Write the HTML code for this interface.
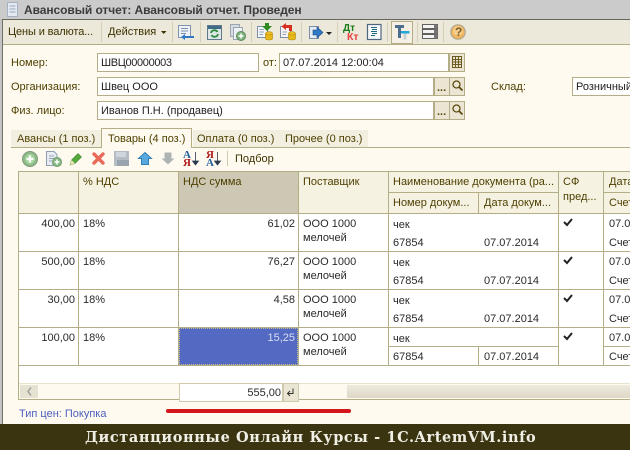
<!DOCTYPE html>
<html><head><meta charset="utf-8"><style>
html,body{margin:0;padding:0}
#p{position:relative;width:630px;height:450px;overflow:hidden;background:#fffaef;font-family:"Liberation Sans",sans-serif;font-size:11px;color:#2a2200;}
#p div{position:absolute;white-space:nowrap;box-sizing:border-box}
.t{line-height:14px;height:14px}
.l{color:#4d3f00;font-size:11px}
.i{background:#fff;border:1px solid #b5ad85;height:19px;line-height:19px;padding-left:3px;font-size:11px;color:#222}
.b{background:#ebe6d3;border:1px solid #b5ad85;height:19px;width:16px}
.h{background:#b5ad85}
.c{color:#2a2a2a;line-height:14px;height:14px;font-size:11px}
.r{text-align:right}
.hd{color:#4d3f00;line-height:14px;height:14px;font-size:11px}
.sep{width:1px;height:20px;top:22px;background:#d5cfb8}
.s{color:#b01818;font-size:11px;font-weight:bold;line-height:10px;height:10px;font-family:"Liberation Serif",serif}
svg{position:absolute;overflow:visible}
</style></head><body><div id="p">
<div style="left:0;top:0;width:630px;height:19px;background:#cbcbcb"></div>
<svg style="left:6px;top:2px" width="14" height="16"><path d="M1.500 .5H11.500V14.500H1.500Z" fill="#e4e9f2" stroke="#a4b0c4"/><path d="M3.500 4H9.500M3.500 7H9.500M3.500 10H9.500" stroke="#9aa8c0"/></svg>
<div class="t" style="left:24px;top:3px;font-weight:bold;font-size:12px;letter-spacing:-.07px;color:#3c3c3c;line-height:15px;height:15px">Авансовый отчет: Авансовый отчет. Проведен</div>
<div style="left:2px;top:19px;width:628px;height:1px;background:#66665c"></div>
<div style="left:0;top:20px;width:630px;height:25px;background:#ece8da;border-bottom:1px solid #b5ad85"></div>
<div style="left:0;top:19px;width:2px;height:405px;background:#c4c4c4"></div>
<div style="left:2px;top:19px;width:1px;height:405px;background:#6f6f68"></div>
<div class="t" style="left:8px;top:25px;color:#3d3200;font-size:11px;letter-spacing:-.12px">Цены и валюта...</div>
<div class="sep" style="left:101px"></div>
<div class="t" style="left:108px;top:25px;color:#3d3200;font-size:11px">Действия</div>
<svg style="left:161px;top:31px" width="6" height="4"><path d="M0 0H5.500L2.700 3Z" fill="#3d3200"/></svg>
<div class="sep" style="left:172px"></div>
<svg style="left:178px;top:25px" width="16" height="16"><path d="M.5 .5H12.500V12.500H.5Z" fill="#eef2f8" stroke="#7d93b0"/><path d="M3 3.500H10M3 6H10M3 8.500H8" stroke="#7d93b0"/><path d="M16 11H7V9L3 12L7 15V13H16Z" fill="#2f78c4"/></svg>
<div class="sep" style="left:200px"></div>
<svg style="left:207px;top:25px" width="15" height="15"><rect x=".5" y=".5" width="14" height="14" fill="#dde7e8" stroke="#607a8c"/><rect x="1" y="1" width="13" height="3" fill="#3f6a88"/><path d="M4 8A3.500 3.500 0 0 1 10.500 7M11 9A3.500 3.500 0 0 1 4.500 10" fill="none" stroke="#2f8a3c" stroke-width="1.800"/></svg>
<svg style="left:230px;top:24px" width="16" height="17"><path d="M.5 .5H9.500V12.500H.5Z" fill="#d8dde4" stroke="#9aa5b2"/><path d="M3.500 3.500H12.500V15.500H3.500Z" fill="#eef1f5" stroke="#9aa5b2"/><circle cx="11" cy="12" r="4.500" fill="#7fb27c" stroke="#5c8a5a"/><path d="M8.500 12H13.500M11 9.500V14.500" stroke="#fff" stroke-width="1.500"/></svg>
<div class="sep" style="left:251px"></div>
<svg style="left:257px;top:23px" width="16" height="18"><path d="M.5 3.500H10.500V14.500H.5Z" fill="#f2f5f9" stroke="#7d8fa8"/><path d="M2.500 6.500H7M2.500 9H7M2.500 11.500H6" stroke="#8fa2ba"/><path d="M8 0H12V3H15L10 8L5 3H8Z" fill="#2e8b1f"/><ellipse cx="12" cy="10.500" rx="3.500" ry="1.800" fill="#f0c020" stroke="#b08a10" stroke-width=".6"/><path d="M8.500 10.500V15.500C8.500 17.500 15.500 17.500 15.500 15.500V10.500C15.500 12.500 8.500 12.500 8.500 10.500Z" fill="#e8b818" stroke="#b08a10" stroke-width=".6"/></svg>
<svg style="left:280px;top:23px" width="16" height="18"><path d="M.5 3.500H10.500V14.500H.5Z" fill="#f8f4f2" stroke="#7d8fa8"/><path d="M2.500 9H7M2.500 11.500H6" stroke="#8fa2ba"/><path d="M6 0L1.500 3.500L6 7V5H9V8H12V2H6Z" fill="#d83020"/><ellipse cx="12" cy="10.500" rx="3.500" ry="1.800" fill="#f0c020" stroke="#b08a10" stroke-width=".6"/><path d="M8.500 10.500V15.500C8.500 17.500 15.500 17.500 15.500 15.500V10.500C15.500 12.500 8.500 12.500 8.500 10.500Z" fill="#e8b818" stroke="#b08a10" stroke-width=".6"/></svg>
<div class="sep" style="left:301px"></div>
<svg style="left:309px;top:26px" width="16" height="15"><path d="M.5 .5H9.500V12.500H.5Z" fill="#e4ebf2" stroke="#7d8fa8"/><path d="M4 4H8V1L14 6.500L8 12V9H4Z" fill="#2f78c4" stroke="#1c4a80" stroke-width=".6"/></svg>
<svg style="left:326px;top:32px" width="6" height="4"><path d="M0 0H6L3 3Z" fill="#222"/></svg>
<div class="sep" style="left:337px"></div>
<div class="t" style="left:343px;top:24px;color:#1a7a1a;font-size:10px;font-weight:bold;line-height:10px;height:10px">Дт</div>
<div class="t" style="left:347px;top:32px;color:#e84040;font-size:10.500px;font-weight:bold;line-height:10px;height:10px">Кт</div>
<svg style="left:367px;top:24px" width="15" height="17"><rect x=".5" y=".5" width="13.500" height="15" fill="#f6f8fa" stroke="#4f6680" stroke-width="1.200"/><path d="M4 3.500H10M5 5.500H10M4 7.500H10M5 9.500H10M4 11.500H8" stroke="#1e6a80"/></svg>
<div class="sep" style="left:387px"></div>
<div style="left:391px;top:21px;width:22px;height:23px;background:#f4f1e4;border:1px solid #b5ad85"></div>
<svg style="left:395px;top:25px" width="14" height="15"><path d="M0 0H9V3H6V13H3V3H0Z" fill="#4e6e90"/><rect x="6" y="6" width="8.500" height="2.500" fill="#22a8d8"/><rect x="8.500" y="8.500" width="3" height="6" fill="#c8d0d4"/></svg>
<div class="sep" style="left:417px"></div>
<svg style="left:422px;top:24px" width="17" height="16"><g fill="#f4f4f4" stroke="#60605c"><rect x=".5" y=".5" width="15" height="4"/><rect x=".5" y="5.500" width="15" height="4"/><rect x=".5" y="10.500" width="15" height="4"/></g><path d="M12 .5H15.500V4.500H12ZM12 5.500H15.500V9.500H12ZM12 10.500H15.500V14.500H12Z" fill="#777"/></svg>
<div class="sep" style="left:443px"></div>
<svg style="left:450px;top:24px" width="16" height="16"><circle cx="8" cy="8" r="7.200" fill="#f2b45c" stroke="#b0a890" stroke-width="1.200"/><circle cx="8" cy="7" r="5" fill="#f6cc88"/></svg>
<div class="t" style="left:455px;top:25px;font-weight:bold;font-size:12px;color:#7a6030">?</div>

<div class="l t" style="left:11px;top:56px">Номер:</div>
<div class="i" style="left:97px;top:53px;width:162px;letter-spacing:-.35px">ШВЦ00000003</div>
<div class="l t" style="left:263px;top:56px">от:</div>
<div class="i" style="left:279px;top:53px;width:170px">07.07.2014 12:00:04</div>
<div class="b" style="left:449px;top:53px"></div>
<svg style="left:452px;top:56px" width="11" height="12"><path d="M.5 .5H9.500V11.500H.5ZM.5 3.500H9.500M.5 6H9.500M.5 8.500H9.500M3.500 .5V11.500M6.500 .5V11.500" fill="none" stroke="#6b5a1e"/></svg>

<div class="l t" style="left:11px;top:80px">Организация:</div>
<div class="i" style="left:97px;top:77px;width:337px">Швец ООО</div>
<div class="b" style="left:434px;top:77px;width:16px"></div>
<div class="b" style="left:449px;top:77px"></div>
<div class="t" style="left:437px;top:81px;font-weight:bold;color:#5c4a10;font-size:11px">...</div>
<svg style="left:452px;top:80px" width="11" height="12"><circle cx="4.500" cy="4.500" r="3.500" fill="none" stroke="#5c4a10" stroke-width="1.300"/><path d="M7 7L10.500 10.500" stroke="#5c4a10" stroke-width="1.800"/></svg>
<div class="l t" style="left:491px;top:80px">Склад:</div>
<div class="i" style="left:572px;top:77px;width:70px">Розничный</div>

<div class="l t" style="left:11px;top:104px">Физ. лицо:</div>
<div class="i" style="left:97px;top:101px;width:337px">Иванов П.Н. (продавец)</div>
<div class="b" style="left:434px;top:101px;width:16px"></div>
<div class="b" style="left:449px;top:101px"></div>
<div class="t" style="left:437px;top:105px;font-weight:bold;color:#5c4a10;font-size:11px">...</div>
<svg style="left:452px;top:104px" width="11" height="12"><circle cx="4.500" cy="4.500" r="3.500" fill="none" stroke="#5c4a10" stroke-width="1.300"/><path d="M7 7L10.500 10.500" stroke="#5c4a10" stroke-width="1.800"/></svg>

<div style="left:11px;top:130px;width:90px;height:17px;background:#f3efe0"></div>
<div style="left:193px;top:130px;width:175px;height:17px;background:#f3efe0"></div>
<div class="h" style="left:11px;top:147px;width:619px;height:1px"></div>
<div style="left:101px;top:128px;width:91px;height:20px;background:#fffaef;border:1px solid #b5ad85;border-bottom:0"></div>
<div class="l t" style="left:17px;top:132px">Авансы (1 поз.)</div>
<div class="l t" style="left:108px;top:132px">Товары (4 поз.)</div>
<div class="l t" style="left:197px;top:132px">Оплата (0 поз.)</div>
<div class="l t" style="left:285px;top:132px">Прочее (0 поз.)</div>

<svg style="left:22px;top:151px" width="16" height="16"><circle cx="8" cy="8" r="7.500" fill="#8fb98a" stroke="#7d9a78"/><circle cx="8" cy="8" r="5" fill="#a5d79d"/><path d="M4.500 8H11.500M8 4.500V11.500" stroke="#fff" stroke-width="2.200"/></svg>
<svg style="left:46px;top:151px" width="16" height="16"><path d="M.5 .5H8L11 3.500V14.500H.5Z" fill="#e8ecf2" stroke="#8f9db0"/><path d="M3 5H8M3 7.500H8M3 10H6" stroke="#96a6b8"/><circle cx="11" cy="11" r="4.500" fill="#86b884" stroke="#6d9a6b"/><path d="M8.500 11H13.500M11 8.500V13.500" stroke="#fff" stroke-width="1.500"/></svg>
<svg style="left:69px;top:152px" width="14" height="14"><path d="M1 13L2.500 8L9 1.500L12.500 5L6 11.500Z" fill="#55a93c" stroke="#3d8a2a" stroke-width=".6"/><path d="M1 13L2.500 8L6 11.500Z" fill="#e8e4b8"/></svg>
<svg style="left:92px;top:152px" width="13" height="13"><path d="M2 2L11 11M11 2L2 11" stroke="#e86a5a" stroke-width="3.400" stroke-linecap="round"/></svg>
<svg style="left:114px;top:151px" width="15" height="15"><rect width="15" height="15" fill="#b4bcc4"/><rect x="2" y="1" width="10" height="5" fill="#cfd6dc"/><rect x="3" y="9" width="12" height="6" fill="#9aa4ae"/></svg>
<svg style="left:138px;top:152px" width="14" height="13"><path d="M7 .5L13.500 6.500H10.500V12.500H3.500V6.500H.5Z" fill="#57a8dc" stroke="#2f7fb8"/></svg>
<svg style="left:161px;top:152px" width="14" height="13"><path d="M7 12.500L13.500 6.500H10.500V.5H3.500V6.500H.5Z" fill="#aeb4b4"/></svg>
<div class="s" style="left:183px;top:150px;color:#1f5fa0">А</div>
<div class="s" style="left:183px;top:158px">Я</div>
<svg style="left:192px;top:152px" width="7" height="14"><path d="M3.500 0V10M.5 9L3.500 13L6.500 9Z" fill="#2a3a50" stroke="#2a3a50" stroke-width=".8"/></svg>
<div class="s" style="left:206px;top:150px">Я</div>
<div class="s" style="left:206px;top:158px;color:#1f5fa0">А</div>
<svg style="left:214px;top:152px" width="7" height="14"><path d="M3.500 0V10M.5 9L3.500 13L6.500 9Z" fill="#2a3a50" stroke="#2a3a50" stroke-width=".8"/></svg>
<div style="left:227px;top:151px;width:1px;height:15px;background:#cfc9b0"></div>
<div class="l t" style="left:235px;top:152px;color:#3d3200">Подбор</div>

<!-- grid -->
<div style="left:18px;top:171px;width:612px;height:42px;background:#f6f2e2"></div>
<div style="left:179px;top:171px;width:119px;height:42px;background:#cdc8b3"></div>
<div style="left:18px;top:213px;width:612px;height:170px;background:#fff"></div>
<div style="left:179px;top:328px;width:119px;height:37px;background:#5369c2;border:1px dotted #c8c090"></div>

<div class="h" style="left:18px;top:171px;width:612px;height:1px"></div>
<div class="h" style="left:18px;top:213px;width:612px;height:1px"></div>
<div class="h" style="left:18px;top:251px;width:612px;height:1px"></div>
<div class="h" style="left:18px;top:289px;width:612px;height:1px"></div>
<div class="h" style="left:18px;top:327px;width:612px;height:1px"></div>
<div class="h" style="left:18px;top:365px;width:612px;height:1px"></div>
<div class="h" style="left:388px;top:192px;width:170px;height:1px"></div>
<div class="h" style="left:603px;top:192px;width:27px;height:1px"></div>
<div class="h" style="left:388px;top:346px;width:170px;height:1px"></div>
<div class="h" style="left:603px;top:346px;width:27px;height:1px"></div>
<div class="h" style="left:18px;top:171px;width:1px;height:229px"></div>
<div class="h" style="left:78px;top:171px;width:1px;height:195px"></div>
<div class="h" style="left:178px;top:171px;width:1px;height:195px"></div>
<div class="h" style="left:298px;top:171px;width:1px;height:195px"></div>
<div class="h" style="left:388px;top:171px;width:1px;height:195px"></div>
<div class="h" style="left:558px;top:171px;width:1px;height:195px"></div>
<div class="h" style="left:603px;top:171px;width:1px;height:195px"></div>
<div class="h" style="left:478px;top:192px;width:1px;height:21px"></div>
<div class="h" style="left:478px;top:346px;width:1px;height:20px"></div>

<div class="hd" style="left:83px;top:175px">% НДС</div>
<div class="hd" style="left:183px;top:175px">НДС сумма</div>
<div class="hd" style="left:303px;top:175px">Поставщик</div>
<div class="hd" style="left:393px;top:175px;width:165px;overflow:hidden">Наименование документа (ра...</div>
<div class="hd" style="left:393px;top:196px">Номер докум...</div>
<div class="hd" style="left:484px;top:196px">Дата докум...</div>
<div class="hd" style="left:563px;top:175px">СФ</div>
<div class="hd" style="left:563px;top:190px">пред...</div>
<div class="hd" style="left:609px;top:175px">Дата</div>
<div class="hd" style="left:609px;top:196px">Счет</div>

<!-- row 1 -->
<div class="c r" style="left:18px;top:217px;width:57px">400,00</div><div class="c" style="left:83px;top:217px">18%</div><div class="c r" style="left:179px;top:217px;width:116px">61,02</div><div class="c" style="left:303px;top:217px">ООО 1000</div><div class="c" style="left:303px;top:231px">мелочей</div><div class="c" style="left:393px;top:218px">чек</div><div class="c" style="left:393px;top:236px">67854</div><div class="c" style="left:484px;top:236px">07.07.2014</div><div class="c" style="left:609px;top:217px">07.07</div><div class="c" style="left:609px;top:236px">Счет</div>
<!-- row 2 -->
<div class="c r" style="left:18px;top:255px;width:57px">500,00</div><div class="c" style="left:83px;top:255px">18%</div><div class="c r" style="left:179px;top:255px;width:116px">76,27</div><div class="c" style="left:303px;top:255px">ООО 1000</div><div class="c" style="left:303px;top:269px">мелочей</div><div class="c" style="left:393px;top:256px">чек</div><div class="c" style="left:393px;top:274px">67854</div><div class="c" style="left:484px;top:274px">07.07.2014</div><div class="c" style="left:609px;top:255px">07.07</div><div class="c" style="left:609px;top:274px">Счет</div>
<!-- row 3 -->
<div class="c r" style="left:18px;top:293px;width:57px">30,00</div><div class="c" style="left:83px;top:293px">18%</div><div class="c r" style="left:179px;top:293px;width:116px">4,58</div><div class="c" style="left:303px;top:293px">ООО 1000</div><div class="c" style="left:303px;top:307px">мелочей</div><div class="c" style="left:393px;top:294px">чек</div><div class="c" style="left:393px;top:312px">67854</div><div class="c" style="left:484px;top:312px">07.07.2014</div><div class="c" style="left:609px;top:293px">07.07</div><div class="c" style="left:609px;top:312px">Счет</div>
<!-- row 4 -->
<div class="c r" style="left:18px;top:331px;width:57px">100,00</div><div class="c" style="left:83px;top:331px">18%</div><div class="c r" style="left:179px;top:331px;width:116px;color:#d8def5">15,25</div><div class="c" style="left:303px;top:331px">ООО 1000</div><div class="c" style="left:303px;top:345px">мелочей</div><div class="c" style="left:393px;top:332px">чек</div><div class="c" style="left:393px;top:350px">67854</div><div class="c" style="left:484px;top:350px">07.07.2014</div><div class="c" style="left:609px;top:331px">07.07</div><div class="c" style="left:609px;top:350px">Счет</div>

<svg style="left:563px;top:218px" width="10" height="9"><path d="M1 4L4 7L9 1" fill="none" stroke="#222" stroke-width="2"/></svg>
<svg style="left:563px;top:256px" width="10" height="9"><path d="M1 4L4 7L9 1" fill="none" stroke="#222" stroke-width="2"/></svg>
<svg style="left:563px;top:294px" width="10" height="9"><path d="M1 4L4 7L9 1" fill="none" stroke="#222" stroke-width="2"/></svg>
<svg style="left:563px;top:332px" width="10" height="9"><path d="M1 4L4 7L9 1" fill="none" stroke="#222" stroke-width="2"/></svg>

<!-- footer -->
<div style="left:19px;top:383px;width:611px;height:16px;background:#fffaef;border-top:1px solid #e8e3cc"></div>
<div style="left:20px;top:385px;width:18px;height:13px;background:#e6e2d2"></div>
<svg style="left:27px;top:387px" width="5" height="9"><path d="M4 .5L1 4.500L4 8.500" fill="none" stroke="#999" stroke-width="1.400"/></svg>
<div style="left:347px;top:385px;width:283px;height:13px;background:linear-gradient(#efebdd,#dcd7c6)"></div>
<div class="h" style="left:18px;top:399px;width:612px;height:1px"></div>
<div style="left:179px;top:383px;width:104px;height:19px;background:#fff;border:1px solid #cfc9ae"></div>
<div class="c r" style="left:180px;top:386px;width:101px">555,00</div>
<div style="left:283px;top:383px;width:16px;height:19px;background:#ebe6d3;border:1px solid #cfc9ae"></div>
<svg style="left:286px;top:388px" width="9" height="9"><path d="M7 .5V5.500H2M4 3L1.500 5.500L4 8" fill="none" stroke="#333"/></svg>
<div style="left:166px;top:409px;width:185px;height:4px;background:#d3161a;border-radius:2px"></div>
<div class="t" style="left:19px;top:407px;color:#4a5fc0;font-size:11px">Тип цен: Покупка</div>

<div style="left:0;top:424px;width:630px;height:26px;background:#3a3510"></div>
<div style="left:85px;top:429px;color:#f0efe6;font-family:'DejaVu Serif',serif;font-weight:bold;font-size:14.500px;line-height:18px;height:18px;letter-spacing:.6px">Дистанционные Онлайн Курсы - 1C.ArtemVM.info</div>
</div></body></html>
